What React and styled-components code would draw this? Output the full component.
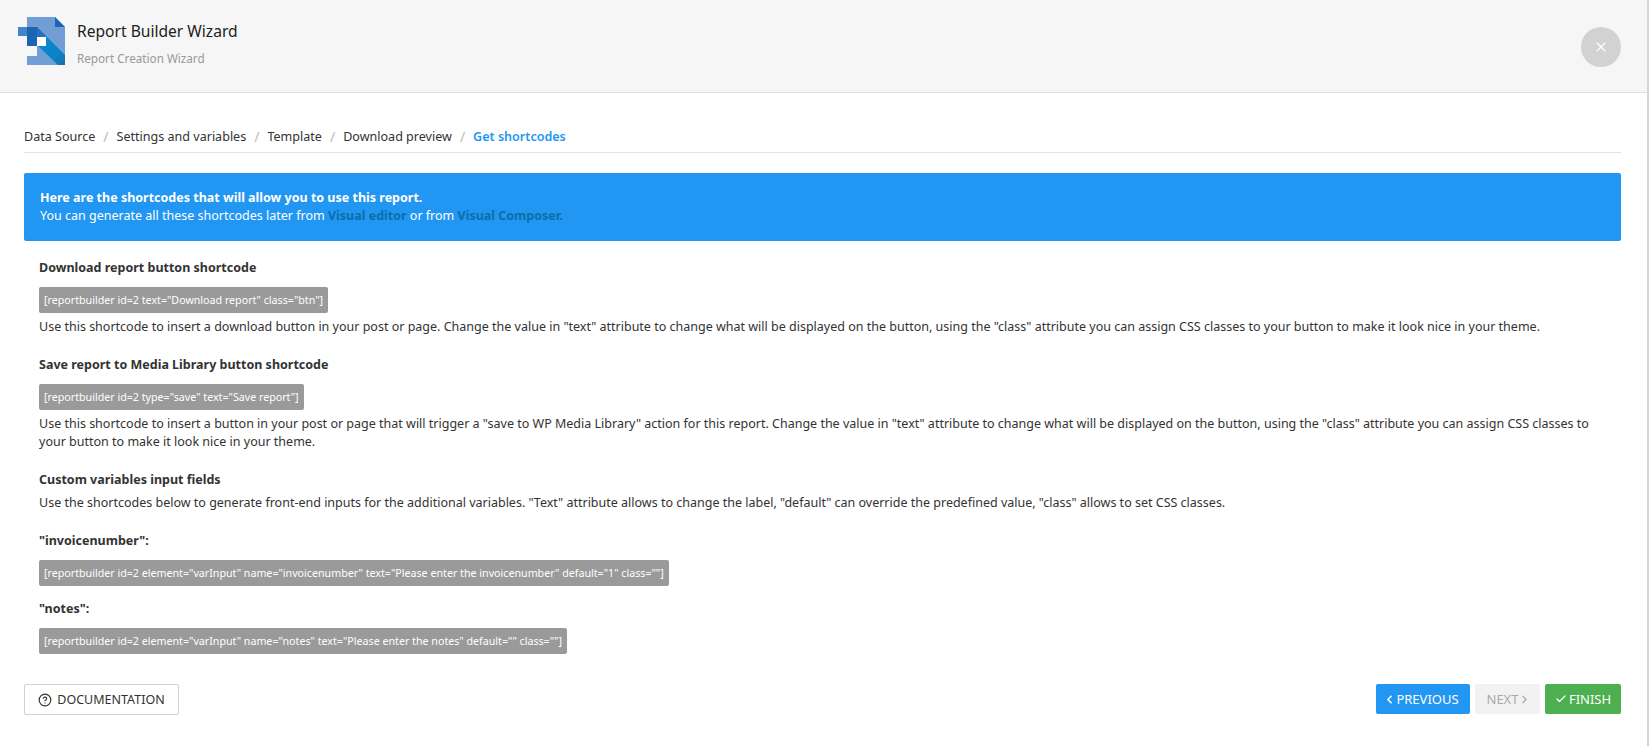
import React from 'react';
import styled, { createGlobalStyle } from 'styled-components';
import { ChevronLeft, ChevronRight, Check, X, CircleHelp } from 'lucide-react';

const Global = createGlobalStyle`
  html, body {
    margin: 0;
    padding: 0;
    background: #fff;
  }
  body {
    font-family: "Noto Sans", "Open Sans", sans-serif;
    font-size: 12.5px;
    line-height: 18px;
    color: #333;
  }
  * { box-sizing: border-box; }
`;

const Page = styled.div`
  width: 1649px;
  height: 746px;
  border-right: 2px solid #d5d5d5;
  overflow: hidden;
`;

const Header = styled.header`
  height: 93px;
  background: #f6f6f6;
  border-bottom: 1px solid #e0e0e0;
  display: flex;
  align-items: flex-start;
  justify-content: space-between;
  padding: 17px 26px 0 17px;
`;

const Brand = styled.div`
  display: flex;
  gap: 12px;
`;

const Titles = styled.div`
  padding-top: 3px;
`;

const Title = styled.div`
  font-size: 15.6px;
  line-height: 22px;
  color: #222;
`;

const Subtitle = styled.div`
  font-size: 11.7px;
  line-height: 18px;
  margin-top: 7px;
  color: #999;
`;

const CloseButton = styled.button`
  width: 40px;
  height: 40px;
  margin-top: 10px;
  border: 0;
  border-radius: 50%;
  background: #d2d2d2;
  color: #fff;
  display: flex;
  align-items: center;
  justify-content: center;
  padding: 0;
`;

const Content = styled.main`
  padding: 35px 26px 0 24px;
  width: 1647px;
`;

const Crumbs = styled.nav`
  display: flex;
  height: 25px;
  border-bottom: 1px solid #e2e2e2;
  align-items: flex-start;
  font-size: 12.55px;
  line-height: 18px;
`;

const Crumb = styled.span`
  color: ${(p) => (p.$active ? '#2196f3' : '#333')};
  font-weight: ${(p) => (p.$active ? 600 : 400)};
`;

const Slash = styled.span`
  color: #bbb;
  padding: 0 8px;
  font-size: 14px;
`;

const Alert = styled.div`
  margin-top: 20px;
  height: 68px;
  background: #2196f3;
  border-radius: 2px;
  color: #fff;
  padding: 16px 16px;
`;

const Strong = styled.div`
  font-weight: 700;
`;

const AlertLink = styled.a`
  color: #0b6fa8;
  font-weight: 700;
`;

const Section = styled.section`
  padding: 0 15px;
`;

const Heading = styled.div`
  font-weight: 700;
  margin-top: ${(p) => p.$top}px;
  line-height: 18px;
  color: #333;
`;

const Code = styled.code`
  display: block;
  width: fit-content;
  margin-top: 10px;
  padding: 0 5px;
  height: 26px;
  line-height: 26px;
  background: #9a9a9a;
  color: #fff;
  border-radius: 2px;
  font-family: inherit;
  font-size: 10.68px;
`;

const Text = styled.p`
  margin: 5px 0 0;
  line-height: 18px;
  color: #333;
`;

const Footer = styled.footer`
  margin-top: 30px;
  display: flex;
  justify-content: space-between;
  align-items: flex-start;
`;

const Actions = styled.div`
  display: flex;
  gap: 5px;
`;

const DocButton = styled.button`
  height: 31px;
  width: 155px;
  background: #fff;
  border: 1px solid #d0d0d0;
  border-radius: 2px;
  display: flex;
  align-items: center;
  justify-content: center;
  gap: 5px;
  font: inherit;
  color: #333;
  padding: 0;
`;

const NavButton = styled.button`
  height: 30px;
  border: 0;
  border-radius: 2px;
  background: ${(p) => p.$bg};
  color: ${(p) => p.$fg || '#fff'};
  width: ${(p) => p.$w}px;
  display: flex;
  align-items: center;
  justify-content: center;
  gap: ${(p) => p.$gap || 0}px;
  font: inherit;
  font-size: 13px;
  padding: 0 ${(p) => p.$right || 0}px 0 ${(p) => p.$left || 0}px;
`;

function Logo() {
  return (
    <svg width="48" height="48" viewBox="0 0 48 48">
      <defs>
        <linearGradient id="band" x1="20" y1="15" x2="48" y2="48" gradientUnits="userSpaceOnUse">
          <stop offset="0" stopColor="#0a8ad4" />
          <stop offset="0.7" stopColor="#0a82c6" />
          <stop offset="1" stopColor="#1b6fa8" />
        </linearGradient>
      </defs>
      <path d="M10 0H38L48 10V48H10V39H20V29H10Z" fill="#719fd5" />
      <path d="M38 0L48 10H38Z" fill="#1a66b5" />
      <path d="M20 10L48 38V48H41L20 28Z" fill="url(#band)" />
      <path d="M20 10L29 19V20H20Z" fill="#2a6fb8" />
      <path d="M1 10H10V19H1Z" fill="#3f86cb" />
      <path d="M10 10H20V29H10Z" fill="#1a66b5" />
      <path d="M20 20H29V29H20Z" fill="#fff" />
    </svg>
  );
}

export default function App() {
  return (
    <Page>
      <Global />
      <Header>
        <Brand>
          <Logo />
          <Titles>
            <Title>Report Builder Wizard</Title>
            <Subtitle>Report Creation Wizard</Subtitle>
          </Titles>
        </Brand>
        <CloseButton aria-label="Close"><X size={16} strokeWidth={1.75} /></CloseButton>
      </Header>
      <Content>
        <Crumbs>
          <Crumb>Data Source</Crumb><Slash>/</Slash>
          <Crumb>Settings and variables</Crumb><Slash>/</Slash>
          <Crumb>Template</Crumb><Slash>/</Slash>
          <Crumb>Download preview</Crumb><Slash>/</Slash>
          <Crumb $active>Get shortcodes</Crumb>
        </Crumbs>
        <Alert>
          <Strong>Here are the shortcodes that will allow you to use this report.</Strong>
          You can generate all these shortcodes later from <AlertLink>Visual editor</AlertLink> or from <AlertLink>Visual Composer.</AlertLink>
        </Alert>
        <Section>
          <Heading $top={18}>Download report button shortcode</Heading>
          <Code>[reportbuilder id=2 text="Download report" class="btn"]</Code>
          <Text>Use this shortcode to insert a download button in your post or page. Change the value in "text" attribute to change what will be displayed on the button, using the "class" attribute you can assign CSS classes to your button to make it look nice in your theme.</Text>
          <Heading $top={20}>Save report to Media Library button shortcode</Heading>
          <Code>[reportbuilder id=2 type="save" text="Save report"]</Code>
          <Text>Use this shortcode to insert a button in your post or page that will trigger a "save to WP Media Library" action for this report. Change the value in "text" attribute to change what will be displayed on the button, using the "class" attribute you can assign CSS classes to your button to make it look nice in your theme.</Text>
          <Heading $top={20}>Custom variables input fields</Heading>
          <Text>Use the shortcodes below to generate front-end inputs for the additional variables. "Text" attribute allows to change the label, "default" can override the predefined value, "class" allows to set CSS classes.</Text>
          <Heading $top={20}>"invoicenumber":</Heading>
          <Code>[reportbuilder id=2 element="varInput" name="invoicenumber" text="Please enter the invoicenumber" default="1" class=""]</Code>
          <Heading $top={14}>"notes":</Heading>
          <Code>[reportbuilder id=2 element="varInput" name="notes" text="Please enter the notes" default="" class=""]</Code>
        </Section>
        <Footer>
          <DocButton><CircleHelp size={14} />DOCUMENTATION</DocButton>
          <Actions>
            <NavButton $bg="#2196f3" $w={94} $right={4}><ChevronLeft size={13} strokeWidth={3} />PREVIOUS</NavButton>
            <NavButton $bg="#f2f2f2" $fg="#aaa" $w={65} $left={3}>NEXT<ChevronRight size={13} strokeWidth={2.5} /></NavButton>
            <NavButton $bg="#4caf50" $w={76} $gap={2}><Check size={12} strokeWidth={2.5} />FINISH</NavButton>
          </Actions>
        </Footer>
      </Content>
    </Page>
  );
}
